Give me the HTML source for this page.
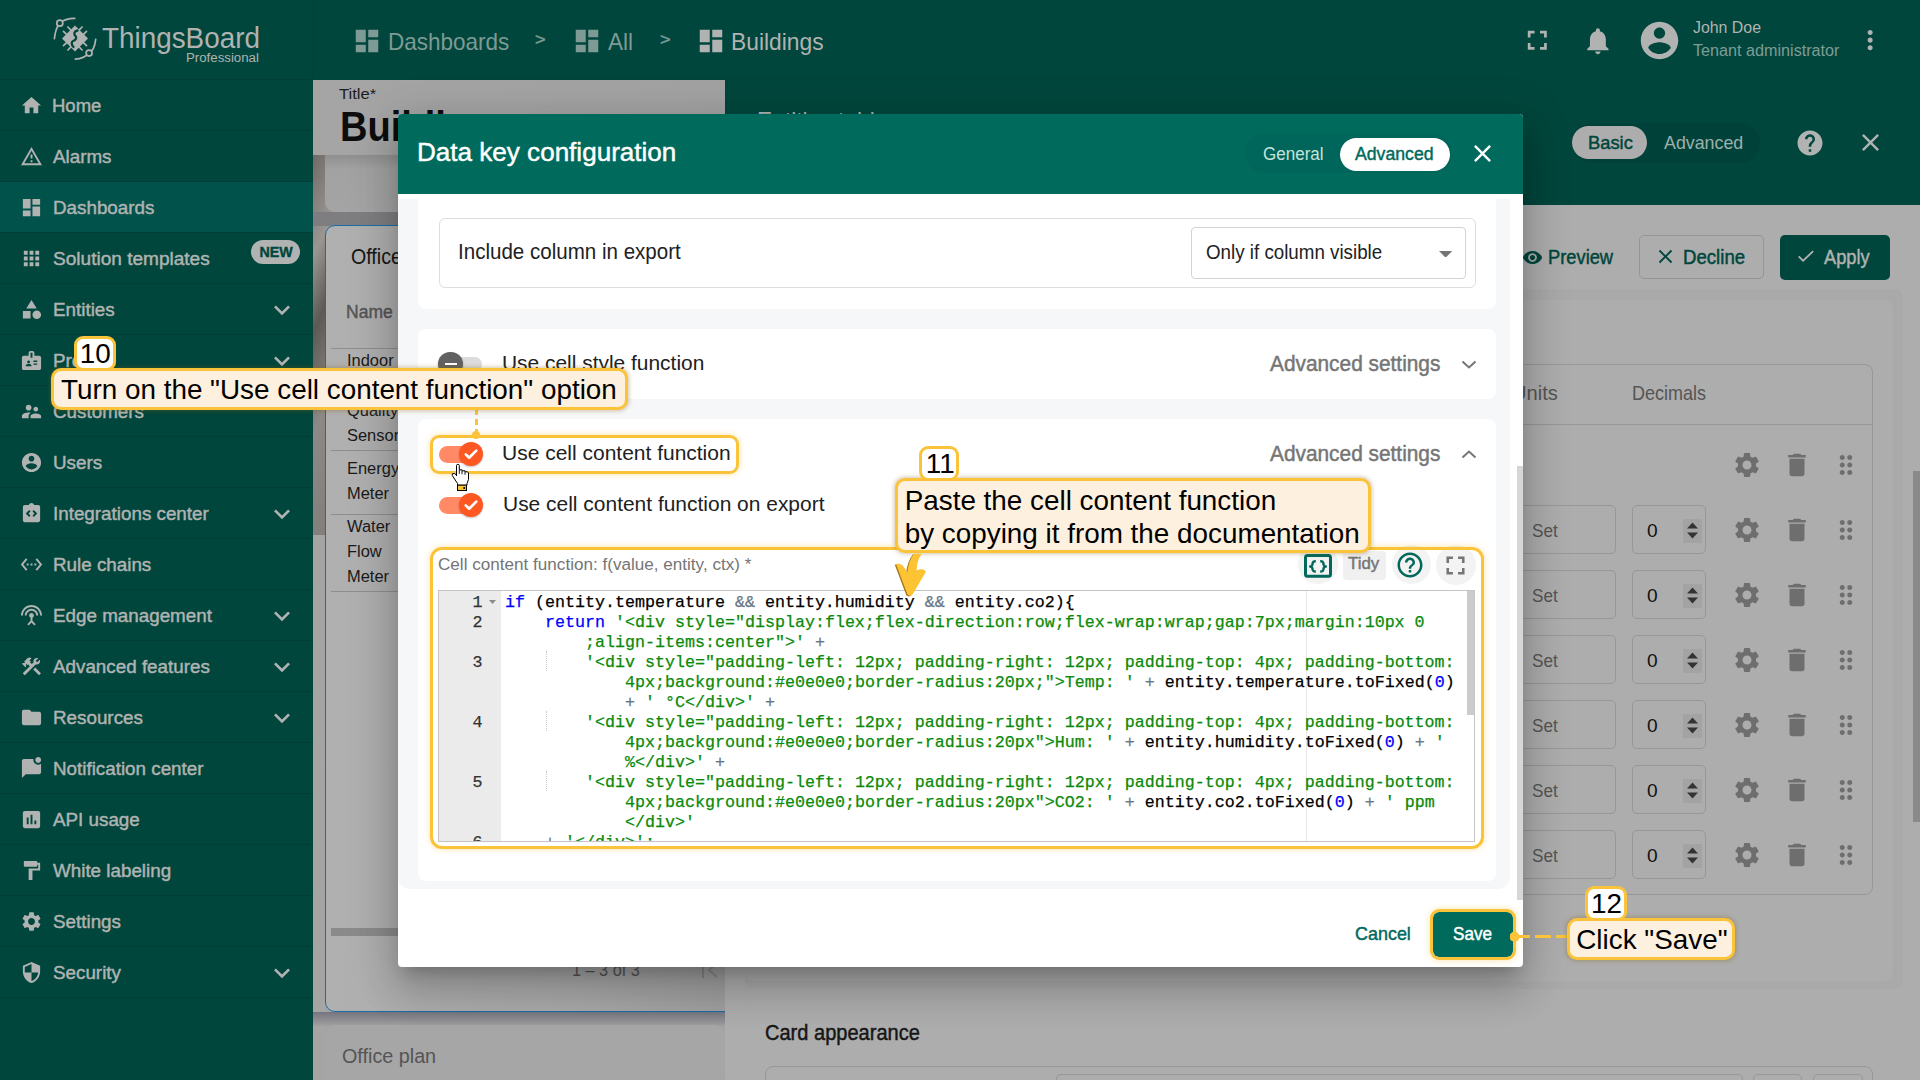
<!DOCTYPE html><html><head><meta charset="utf-8"><style>*{box-sizing:border-box;margin:0;padding:0}
html,body{width:1920px;height:1080px;overflow:hidden;background:#a9a9a9;font-family:"Liberation Sans",sans-serif;position:relative}
.abs{position:absolute}
svg{display:block}
#sidebar{position:absolute;left:0;top:0;width:313px;height:1080px;background:#00463c}
.logo{position:absolute;left:0;top:0;width:313px;height:80px;border-bottom:1px solid #003d36}
.mi{position:absolute;left:0;width:313px;height:51px;border-bottom:1px solid #003e37;color:#b0b3b2;font-size:19px;font-weight:bold}
.mi.active{background:#00524a}

.new{position:absolute;left:251.4px;top:6.9px;width:48.9px;height:24.4px;border-radius:12.2px;background:#b0b3b2;color:#00463c;font-size:15.5px;-webkit-text-stroke:0.4px #00463c;text-align:center;line-height:24.4px}.new span{display:inline-block;transform:scaleX(0.92)}
#topbar{position:absolute;left:313px;top:0;width:1607px;height:80px;background:#00463c}
.t{white-space:nowrap;line-height:1}
.mi .t{position:absolute}
.code{font-family:"Liberation Mono",monospace;font-size:16.67px;line-height:20px;white-space:pre;color:#000;-webkit-text-stroke:0.25px currentColor}
</style></head><body>
<div id="sidebar"><div class="logo">
<svg class="abs" style="left:40px;top:10px" width="70" height="60" viewBox="0 0 70 60">
  <g fill="none" stroke="#b0b3b2" stroke-width="1.7" stroke-linecap="round">
    <path d="M14.4 28.7Q15.5 18 19.8 13.2Q25 8.5 34.7 8.4"/>
    <path d="M55.7 29.3Q54.5 40 49.1 43.1Q44 48.5 35.3 49.1"/>
    <path d="M39.3 19.8L42.1 17M43.7 24.2L46.5 21.4M43.7 32.8L46.5 35.6M39.3 37.2L42.1 40M30.7 37.2L27.9 40M26.3 32.8L23.5 35.6M26.3 24.2L23.5 21.4M30.7 19.8L27.9 17"/>
  </g>
  <circle cx="19.8" cy="13.2" r="3" fill="#00463c" stroke="#b0b3b2" stroke-width="1.7"/>
  <circle cx="49.1" cy="43.1" r="3" fill="#00463c" stroke="#b0b3b2" stroke-width="1.7"/>
  <path fill="#b0b3b2" d="M35 15.5L48 28.5L35 41.5L22 28.5Z"/>
  <path fill="none" stroke="#00463c" stroke-width="2.3" stroke-linecap="round" d="M37.5 20.5C34 21 33.5 24.5 35.5 26C37 27.5 36 30 33 31C31 32 31.5 35 33.5 37"/>
</svg>
<div class="abs t " style="left:101.70px;top:22.57px;font-size:30.2px;color:#b0b3b2;font-weight:normal;transform:scaleX(0.9228);transform-origin:0 0;">ThingsBoard</div>
<div class="abs t " style="left:185.92px;top:52.33px;font-size:12.3px;color:#b0b3b2;font-weight:normal;transform:scaleX(1.0768);transform-origin:0 0;">Professional</div>
</div>
<div class="mi" style="top:80px">
<svg class="abs" style="left:19.8px;top:14.2px;" width="23" height="23" viewBox="0 0 24 24"><path fill="#b0b3b2" d="M10 20v-6h4v6h5v-8h3L12 3 2 12h3v8z"/></svg>
<div class="abs t " style="left:52.03px;top:15.84px;font-size:19.1px;color:#b0b3b2;font-weight:normal;transform:scaleX(0.9693);transform-origin:0 0;-webkit-text-stroke:0.45px #b0b3b2;">Home</div>
</div>
<div class="mi" style="top:131px">
<svg class="abs" style="left:19.8px;top:14.2px;" width="23" height="23" viewBox="0 0 24 24"><path fill="#b0b3b2" d="M12 5.99L19.53 19H4.47L12 5.99M12 2L1 21h22L12 2zm1 14h-2v2h2v-2zm0-6h-2v4h2v-4z"/></svg>
<div class="abs t " style="left:53.00px;top:15.84px;font-size:19.1px;color:#b0b3b2;font-weight:normal;transform:scaleX(0.9850);transform-origin:0 0;-webkit-text-stroke:0.45px #b0b3b2;">Alarms</div>
</div>
<div class="mi active" style="top:182px">
<svg class="abs" style="left:19.8px;top:14.2px;" width="23" height="23" viewBox="0 0 24 24"><path fill="#b0b3b2" d="M3 13h8V3H3v10zm0 8h8v-6H3v6zm10 0h8V11h-8v10zm0-18v6h8V3h-8z"/></svg>
<div class="abs t " style="left:53.00px;top:15.84px;font-size:19.1px;color:#b0b3b2;font-weight:normal;transform:scaleX(0.9850);transform-origin:0 0;-webkit-text-stroke:0.45px #b0b3b2;">Dashboards</div>
</div>
<div class="mi" style="top:233px">
<svg class="abs" style="left:19.8px;top:14.2px;" width="23" height="23" viewBox="0 0 24 24"><path fill="#b0b3b2" d="M4 8h4V4H4v4zm6 12h4v-4h-4v4zm-6 0h4v-4H4v4zm0-6h4v-4H4v4zm6 0h4v-4h-4v4zm6-10v4h4V4h-4zm-6 4h4V4h-4v4zm6 6h4v-4h-4v4zm0 6h4v-4h-4v4z"/></svg>
<div class="abs t " style="left:53.00px;top:15.84px;font-size:19.1px;color:#b0b3b2;font-weight:normal;transform:scaleX(0.9978);transform-origin:0 0;-webkit-text-stroke:0.45px #b0b3b2;">Solution templates</div>
<div class="new"><span>NEW</span></div>
</div>
<div class="mi" style="top:284px">
<svg class="abs" style="left:19.8px;top:14.2px;" width="23" height="23" viewBox="0 0 24 24"><path fill="#b0b3b2" d="M12 2l-5.5 9h11zM17.5 13a4.5 4.5 0 1 0 0 9a4.5 4.5 0 1 0 0-9zM3 13.5h8v8H3z"/></svg>
<div class="abs t " style="left:53.00px;top:15.84px;font-size:19.1px;color:#b0b3b2;font-weight:normal;transform:scaleX(0.9850);transform-origin:0 0;-webkit-text-stroke:0.45px #b0b3b2;">Entities</div>
<svg class="abs" style="left:266px;top:10px;" width="32" height="32" viewBox="0 0 24 24"><path fill="#b0b3b2" d="M16.59 8.59L12 13.17 7.41 8.59 6 10l6 6 6-6z"/></svg>
</div>
<div class="mi" style="top:335px">
<svg class="abs" style="left:19.8px;top:14.2px;" width="23" height="23" viewBox="0 0 24 24"><path fill="#b0b3b2" d="M20 7h-5V4c0-1.1-.9-2-2-2h-2c-1.1 0-2 .9-2 2v3H4c-1.1 0-2 .9-2 2v11c0 1.1.9 2 2 2h16c1.1 0 2-.9 2-2V9c0-1.1-.9-2-2-2zM9 12c.83 0 1.5.67 1.5 1.5S9.83 15 9 15s-1.5-.67-1.5-1.5S8.17 12 9 12zm3 6H6v-.75c0-1 2-1.5 3-1.5s3 .5 3 1.5V18zm1-9h-2V4h2v5zm5 7.5h-4V15h4v1.5zm0-3h-4V12h4v1.5z"/></svg>
<div class="abs t " style="left:53.00px;top:15.84px;font-size:19.1px;color:#b0b3b2;font-weight:normal;transform:scaleX(0.9850);transform-origin:0 0;-webkit-text-stroke:0.45px #b0b3b2;">Profiles</div>
<svg class="abs" style="left:266px;top:10px;" width="32" height="32" viewBox="0 0 24 24"><path fill="#b0b3b2" d="M16.59 8.59L12 13.17 7.41 8.59 6 10l6 6 6-6z"/></svg>
</div>
<div class="mi" style="top:386px">
<svg class="abs" style="left:19.8px;top:14.2px;" width="23" height="23" viewBox="0 0 24 24"><path fill="#b0b3b2" d="M16.5 12c1.38 0 2.49-1.12 2.49-2.5S17.88 7 16.5 7C15.12 7 14 8.12 14 9.5s1.12 2.5 2.5 2.5zM9 11c1.66 0 2.99-1.34 2.99-3S10.66 5 9 5C7.34 5 6 6.34 6 8s1.34 3 3 3zm7.5 3c-1.83 0-5.5.92-5.5 2.75V19h11v-2.25c0-1.830-3.67-2.75-5.5-2.75zM9 13c-2.33 0-7 1.17-7 3.5V19h7v-2.25c0-.85.33-2.34 2.37-3.47C10.5 13.1 9.660 13 9 13z"/></svg>
<div class="abs t " style="left:53.00px;top:15.84px;font-size:19.1px;color:#b0b3b2;font-weight:normal;transform:scaleX(0.9850);transform-origin:0 0;-webkit-text-stroke:0.45px #b0b3b2;">Customers</div>
</div>
<div class="mi" style="top:437px">
<svg class="abs" style="left:19.8px;top:14.2px;" width="23" height="23" viewBox="0 0 24 24"><path fill="#b0b3b2" d="M12 2C6.48 2 2 6.48 2 12s4.48 10 10 10 10-4.48 10-10S17.52 2 12 2zm0 3c1.66 0 3 1.34 3 3s-1.34 3-3 3-3-1.34-3-3 1.34-3 3-3zm0 14.2c-2.5 0-4.71-1.28-6-3.22.03-1.99 4-3.08 6-3.08 1.99 0 5.97 1.09 6 3.08-1.29 1.94-3.5 3.22-6 3.22z"/></svg>
<div class="abs t " style="left:53.00px;top:15.84px;font-size:19.1px;color:#b0b3b2;font-weight:normal;transform:scaleX(0.9850);transform-origin:0 0;-webkit-text-stroke:0.45px #b0b3b2;">Users</div>
</div>
<div class="mi" style="top:488px">
<svg class="abs" style="left:19.8px;top:14.2px;" width="23" height="23" viewBox="0 0 24 24"><path fill="#b0b3b2" d="M5 3h4.2C9.6 1.8 10.7 1 12 1s2.4.8 2.8 2H19c1.1 0 2 .9 2 2v14c0 1.1-.9 2-2 2H5c-1.1 0-2-.9-2-2V5c0-1.1.9-2 2-2zM11 14.17L8.83 12 11 9.83 9.59 8.41 6 12l3.59 3.59zm2 0l1.41 1.42L18 12l-3.59-3.59L13 9.83 15.17 12z"/></svg>
<div class="abs t " style="left:53.00px;top:15.84px;font-size:19.1px;color:#b0b3b2;font-weight:normal;transform:scaleX(0.9850);transform-origin:0 0;-webkit-text-stroke:0.45px #b0b3b2;">Integrations center</div>
<svg class="abs" style="left:266px;top:10px;" width="32" height="32" viewBox="0 0 24 24"><path fill="#b0b3b2" d="M16.59 8.59L12 13.17 7.41 8.59 6 10l6 6 6-6z"/></svg>
</div>
<div class="mi" style="top:539px">
<svg class="abs" style="left:19.8px;top:14.2px;" width="23" height="23" viewBox="0 0 24 24"><path fill="#b0b3b2" d="M7.77 6.76L6.23 5.48.82 12l5.41 6.52 1.54-1.28L3.42 12l4.35-5.24zM7 13h2v-2H7v2zm10-2h-2v2h2v-2zm-6 2h2v-2h-2v2zm6.77-7.52l-1.54 1.28L20.58 12l-4.35 5.24 1.54 1.28L23.18 12l-5.41-6.52z"/></svg>
<div class="abs t " style="left:53.00px;top:15.84px;font-size:19.1px;color:#b0b3b2;font-weight:normal;transform:scaleX(0.9850);transform-origin:0 0;-webkit-text-stroke:0.45px #b0b3b2;">Rule chains</div>
</div>
<div class="mi" style="top:590px">
<svg class="abs" style="left:19.8px;top:14.2px;" width="23" height="23" viewBox="0 0 24 24"><path fill="#b0b3b2" d="M12 5c-3.87 0-7 3.13-7 7h2c0-2.76 2.24-5 5-5s5 2.24 5 5h2c0-3.87-3.13-7-7-7zm1 9.29c.88-.39 1.5-1.26 1.5-2.29 0-1.38-1.12-2.5-2.5-2.5S9.5 10.62 9.5 12c0 1.02.62 1.9 1.5 2.29v3.3L7.59 21 9 22.41l3-3 3 3L16.41 21 13 17.59v-3.3zM12 1C5.93 1 1 5.930 1 12h2c0-4.97 4.03-9 9-9s9 4.03 9 9h2c0-6.07-4.93-11-11-11z"/></svg>
<div class="abs t " style="left:53.00px;top:15.84px;font-size:19.1px;color:#b0b3b2;font-weight:normal;transform:scaleX(0.9850);transform-origin:0 0;-webkit-text-stroke:0.45px #b0b3b2;">Edge management</div>
<svg class="abs" style="left:266px;top:10px;" width="32" height="32" viewBox="0 0 24 24"><path fill="#b0b3b2" d="M16.59 8.59L12 13.17 7.41 8.59 6 10l6 6 6-6z"/></svg>
</div>
<div class="mi" style="top:641px">
<svg class="abs" style="left:19.8px;top:14.2px;" width="23" height="23" viewBox="0 0 24 24"><path fill="#b0b3b2" d="M13.783 15.172l2.121-2.121 5.996 5.996-2.121 2.121zM17.5 10c1.93 0 3.5-1.57 3.5-3.5 0-.58-.16-1.12-.41-1.6l-2.7 2.7-1.49-1.49 2.7-2.7c-.48-.25-1.02-.41-1.6-.41C15.57 3 14 4.57 14 6.5c0 .41.08.8.21 1.16l-1.85 1.85-1.78-1.78.71-.71-1.41-1.41L12 3.49c-1.17-1.17-3.07-1.17-4.24 0L4.22 7.03l1.41 1.41H2.81l-.71.71 3.54 3.54.71-.71V9.15l1.41 1.41.71-.71 1.78 1.78-7.41 7.41 2.12 2.12L16.34 9.79c.36.13.75.21 1.16.21z"/></svg>
<div class="abs t " style="left:53.00px;top:15.84px;font-size:19.1px;color:#b0b3b2;font-weight:normal;transform:scaleX(0.9850);transform-origin:0 0;-webkit-text-stroke:0.45px #b0b3b2;">Advanced features</div>
<svg class="abs" style="left:266px;top:10px;" width="32" height="32" viewBox="0 0 24 24"><path fill="#b0b3b2" d="M16.59 8.59L12 13.17 7.41 8.59 6 10l6 6 6-6z"/></svg>
</div>
<div class="mi" style="top:692px">
<svg class="abs" style="left:19.8px;top:14.2px;" width="23" height="23" viewBox="0 0 24 24"><path fill="#b0b3b2" d="M10 4H4c-1.1 0-1.99.9-1.99 2L2 18c0 1.1.9 2 2 2h16c1.1 0 2-.9 2-2V8c0-1.1-.9-2-2-2h-8l-2-2z"/></svg>
<div class="abs t " style="left:53.00px;top:15.84px;font-size:19.1px;color:#b0b3b2;font-weight:normal;transform:scaleX(0.9850);transform-origin:0 0;-webkit-text-stroke:0.45px #b0b3b2;">Resources</div>
<svg class="abs" style="left:266px;top:10px;" width="32" height="32" viewBox="0 0 24 24"><path fill="#b0b3b2" d="M16.59 8.59L12 13.17 7.41 8.59 6 10l6 6 6-6z"/></svg>
</div>
<div class="mi" style="top:743px">
<svg class="abs" style="left:19.8px;top:14.2px;" width="23" height="23" viewBox="0 0 24 24"><path fill="#b0b3b2" d="M22 6.98V16c0 1.1-.9 2-2 2H6l-4 4V4c0-1.1.9-2 2-2h10.1c-.06.32-.1.66-.1 1 0 2.76 2.24 5 5 5 1.13 0 2.16-.39 3-1.02zM16 3c0 1.66 1.34 3 3 3s3-1.34 3-3-1.34-3-3-3-3 1.34-3 3z"/></svg>
<div class="abs t " style="left:53.00px;top:15.84px;font-size:19.1px;color:#b0b3b2;font-weight:normal;transform:scaleX(0.9850);transform-origin:0 0;-webkit-text-stroke:0.45px #b0b3b2;">Notification center</div>
</div>
<div class="mi" style="top:794px">
<svg class="abs" style="left:19.8px;top:14.2px;" width="23" height="23" viewBox="0 0 24 24"><path fill="#b0b3b2" d="M19 3H5c-1.1 0-2 .9-2 2v14c0 1.1.9 2 2 2h14c1.1 0 2-.9 2-2V5c0-1.1-.9-2-2-2zM9 17H7v-7h2v7zm4 0h-2V7h2v10zm4 0h-2v-4h2v4z"/></svg>
<div class="abs t " style="left:53.00px;top:15.84px;font-size:19.1px;color:#b0b3b2;font-weight:normal;transform:scaleX(0.9850);transform-origin:0 0;-webkit-text-stroke:0.45px #b0b3b2;">API usage</div>
</div>
<div class="mi" style="top:845px">
<svg class="abs" style="left:19.8px;top:14.2px;" width="23" height="23" viewBox="0 0 24 24"><path fill="#b0b3b2" d="M18 4V3c0-.55-.45-1-1-1H5c-.55 0-1 .45-1 1v4c0 .55.45 1 1 1h12c.55 0 1-.45 1-1V6h1v4H9v11c0 .55.45 1 1 1h2c.55 0 1-.45 1-1v-9h8V4h-3z"/></svg>
<div class="abs t " style="left:53.00px;top:15.84px;font-size:19.1px;color:#b0b3b2;font-weight:normal;transform:scaleX(0.9850);transform-origin:0 0;-webkit-text-stroke:0.45px #b0b3b2;">White labeling</div>
</div>
<div class="mi" style="top:896px">
<svg class="abs" style="left:19.8px;top:14.2px;" width="23" height="23" viewBox="0 0 24 24"><path fill="#b0b3b2" d="M19.14 12.94c.04-.3.06-.61.06-.94 0-.32-.02-.64-.07-.94l2.03-1.58c.18-.14.23-.41.12-.61l-1.92-3.32c-.12-.22-.37-.29-.59-.22l-2.39.96c-.5-.38-1.03-.7-1.62-.94l-.36-2.54c-.04-.24-.24-.41-.48-.41h-3.84c-.24 0-.43.17-.47.41l-.36 2.54c-.59.24-1.13.57-1.62.94l-2.39-.96c-.22-.08-.47 0-.59.22L2.74 8.87c-.12.21-.08.47.12.61l2.03 1.58c-.05.3-.09.63-.09.94s.02.64.07.94l-2.03 1.58c-.18.14-.23.41-.12.61l1.92 3.32c.12.22.37.29.59.22l2.39-.96c.5.38 1.03.7 1.62.94l.36 2.54c.05.24.24.41.48.41h3.840c.24 0 .44-.17.47-.41l.36-2.54c.59-.24 1.13-.56 1.62-.94l2.39.96c.22.08.47 0 .59-.22l1.92-3.32c.12-.22.07-.47-.12-.61l-2.01-1.58zM12 15.6c-1.98 0-3.6-1.62-3.6-3.6s1.62-3.6 3.6-3.6 3.6 1.62 3.6 3.6-1.62 3.6-3.6 3.6z"/></svg>
<div class="abs t " style="left:53.00px;top:15.84px;font-size:19.1px;color:#b0b3b2;font-weight:normal;transform:scaleX(0.9850);transform-origin:0 0;-webkit-text-stroke:0.45px #b0b3b2;">Settings</div>
</div>
<div class="mi" style="top:947px">
<svg class="abs" style="left:19.8px;top:14.2px;" width="23" height="23" viewBox="0 0 24 24"><path fill="#b0b3b2" d="M12 1L3 5v6c0 5.55 3.84 10.74 9 12 5.16-1.26 9-6.45 9-12V5l-9-4zm0 10.99h7c-.53 4.12-3.28 7.79-7 8.94V12H5V6.3l7-3.11v8.8z"/></svg>
<div class="abs t " style="left:53.00px;top:15.84px;font-size:19.1px;color:#b0b3b2;font-weight:normal;transform:scaleX(0.9850);transform-origin:0 0;-webkit-text-stroke:0.45px #b0b3b2;">Security</div>
<svg class="abs" style="left:266px;top:10px;" width="32" height="32" viewBox="0 0 24 24"><path fill="#b0b3b2" d="M16.59 8.59L12 13.17 7.41 8.59 6 10l6 6 6-6z"/></svg>
</div>
</div>
<div id="topbar"></div>
<div class="abs" style="left:313px;top:0;width:1px;height:80px;background:#00403a"></div>
<svg class="abs" style="left:351.5px;top:25.5px;" width="30" height="30" viewBox="0 0 24 24"><path fill="#7d9a95" d="M3 13h8V3H3v10zm0 8h8v-6H3v6zm10 0h8V11h-8v10zm0-18v6h8V3h-8z"/></svg>
<div class="abs t " style="left:388.03px;top:31.49px;font-size:23.2px;color:#7d9a95;font-weight:normal;transform:scaleX(0.9705);transform-origin:0 0;">Dashboards</div>
<div class="abs t " style="left:535.00px;top:30.78px;font-size:17px;color:#7d9a95;font-weight:normal;transform:scaleX(1.0700);transform-origin:0 0;-webkit-text-stroke:0.45px #7d9a95;">&gt;</div>
<svg class="abs" style="left:572px;top:25.5px;" width="30" height="30" viewBox="0 0 24 24"><path fill="#7d9a95" d="M3 13h8V3H3v10zm0 8h8v-6H3v6zm10 0h8V11h-8v10zm0-18v6h8V3h-8z"/></svg>
<div class="abs t " style="left:608.00px;top:31.49px;font-size:23.2px;color:#7d9a95;font-weight:normal;transform:scaleX(0.9749);transform-origin:0 0;">All</div>
<div class="abs t " style="left:659.80px;top:30.78px;font-size:17px;color:#7d9a95;font-weight:normal;transform:scaleX(1.0700);transform-origin:0 0;-webkit-text-stroke:0.45px #7d9a95;">&gt;</div>
<svg class="abs" style="left:695.5px;top:25.5px;" width="30" height="30" viewBox="0 0 24 24"><path fill="#b0b3b2" d="M3 13h8V3H3v10zm0 8h8v-6H3v6zm10 0h8V11h-8v10zm0-18v6h8V3h-8z"/></svg>
<div class="abs t " style="left:731.02px;top:31.49px;font-size:23.2px;color:#b0b3b2;font-weight:normal;transform:scaleX(0.9837);transform-origin:0 0;">Buildings</div>
<svg class="abs" style="left:1521px;top:23.5px;" width="32.6" height="32.6" viewBox="0 0 24 24"><path fill="#b0b3b2" d="M7 14H5v5h5v-2H7v-3zm-2-4h2V7h3V5H5v5zm12 7h-3v2h5v-5h-2v3zM14 5v2h3v3h2V5h-5z"/></svg>
<svg class="abs" style="left:1581.5px;top:24.6px;" width="31.8" height="31.8" viewBox="0 0 24 24"><path fill="#b0b3b2" d="M12 22c1.1 0 2-.9 2-2h-4c0 1.1.89 2 2 2zm6-6v-5c0-3.07-1.64-5.64-4.5-6.32V4c0-.83-.67-1.5-1.5-1.5s-1.5.67-1.5 1.5v.68C7.63 5.36 6 7.920 6 11v5l-2 2v1h16v-1l-2-2z"/></svg>
<svg class="abs" style="left:1637.2px;top:18px;" width="45" height="45" viewBox="0 0 24 24"><path fill="#b0b3b2" d="M12 2C6.48 2 2 6.48 2 12s4.48 10 10 10 10-4.48 10-10S17.52 2 12 2zm0 3c1.66 0 3 1.34 3 3s-1.34 3-3 3-3-1.34-3-3 1.34-3 3-3zm0 14.2c-2.5 0-4.71-1.28-6-3.22.03-1.99 4-3.08 6-3.08 1.99 0 5.97 1.09 6 3.08-1.29 1.94-3.5 3.22-6 3.22z"/></svg>
<div class="abs t " style="left:1693.00px;top:19.03px;font-size:17.3px;color:#b0b3b2;font-weight:normal;transform:scaleX(0.9187);transform-origin:0 0;">John Doe</div>
<div class="abs t " style="left:1693.00px;top:42.23px;font-size:17.3px;color:#7f9c97;font-weight:normal;transform:scaleX(0.9355);transform-origin:0 0;">Tenant administrator</div>
<svg class="abs" style="left:1855px;top:25px;" width="30.3" height="30.3" viewBox="0 0 24 24"><path fill="#b0b3b2" d="M12 8c1.1 0 2-.9 2-2s-.9-2-2-2-2 .9-2 2 .9 2 2 2zm0 2c-1.1 0-2 .9-2 2s.9 2 2 2 2-.9 2-2-.9-2-2-2zm0 6c-1.1 0-2 .9-2 2s.9 2 2 2 2-.9 2-2-.9-2-2-2z"/></svg>
<div class="abs" style="left:313px;top:80px;width:412px;height:1000px;background:#a3a3a3"></div>
<div class="abs" style="left:313px;top:80px;width:412px;height:75px;background:linear-gradient(90deg,#a5a5a5,#a2a2a2)"></div>
<div class="abs t " style="left:339.00px;top:85.87px;font-size:15.2px;color:#1c1c1c;font-weight:normal;transform:scaleX(1.0930);transform-origin:0 0;">Title*</div>
<div class="abs t " style="left:339.90px;top:106.23px;font-size:42.3px;color:#0d0d0d;font-weight:bold;transform:scaleX(0.9000);transform-origin:0 0;">Buildings</div>
<div class="abs" style="left:313px;top:155px;width:412px;height:380px;background:linear-gradient(115deg,#6f6a66 0%,#9a9793 8%,#5d5955 14%,#8c8986 22%,#7a7672 40%,#908d8a 60%,#6c6864 100%)"></div>
<div class="abs" style="left:325px;top:155px;width:400px;height:57px;background:linear-gradient(180deg,#8f8f8f 0%,#a2a2a2 25%,#a4a4a4 100%);border-bottom-left-radius:10px"></div>
<div class="abs" style="left:313px;top:212px;width:412px;height:14px;background:#7e7e80"></div>
<div class="abs" style="left:313px;top:535px;width:12px;height:545px;background:#a5a5a5"></div>
<div class="abs" style="left:325px;top:225px;width:420px;height:787px;border:1.5px solid #1a6ea8;border-radius:10px;background:linear-gradient(90deg,#b0b0b0,#a9a9a9 60%,#9e9e9e)"></div>
<div class="abs t " style="left:350.70px;top:246.89px;font-size:21.3px;color:#161616;font-weight:normal;transform:scaleX(0.9200);transform-origin:0 0;">Office</div>
<div class="abs t " style="left:345.76px;top:302.91px;font-size:18.7px;color:#555555;font-weight:normal;transform:scaleX(0.9369);transform-origin:0 0;-webkit-text-stroke:0.45px #555555;">Name</div>
<div class="abs" style="left:331px;top:348px;width:400px;height:1px;background:#8e8e8e"></div>
<div class="abs" style="left:331px;top:449.5px;width:400px;height:1px;background:#8e8e8e"></div>
<div class="abs" style="left:331px;top:514px;width:400px;height:1px;background:#8e8e8e"></div>
<div class="abs" style="left:331px;top:590.5px;width:400px;height:1px;background:#8e8e8e"></div>
<div class="abs t " style="left:346.70px;top:352.51px;font-size:16.8px;color:#1a1a1a;font-weight:normal;transform:scaleX(0.9800);transform-origin:0 0;">Indoor</div>
<div class="abs t " style="left:346.70px;top:377.51px;font-size:16.8px;color:#1a1a1a;font-weight:normal;transform:scaleX(0.9800);transform-origin:0 0;">Air</div>
<div class="abs t " style="left:346.70px;top:402.51px;font-size:16.8px;color:#1a1a1a;font-weight:normal;transform:scaleX(0.9800);transform-origin:0 0;">Quality</div>
<div class="abs t " style="left:346.70px;top:427.51px;font-size:16.8px;color:#1a1a1a;font-weight:normal;transform:scaleX(0.9800);transform-origin:0 0;">Sensor</div>
<div class="abs t " style="left:346.70px;top:460.51px;font-size:16.8px;color:#1a1a1a;font-weight:normal;transform:scaleX(0.9800);transform-origin:0 0;">Energy</div>
<div class="abs t " style="left:346.70px;top:485.51px;font-size:16.8px;color:#1a1a1a;font-weight:normal;transform:scaleX(0.9800);transform-origin:0 0;">Meter</div>
<div class="abs t " style="left:346.70px;top:518.51px;font-size:16.8px;color:#1a1a1a;font-weight:normal;transform:scaleX(0.9800);transform-origin:0 0;">Water</div>
<div class="abs t " style="left:346.70px;top:543.51px;font-size:16.8px;color:#1a1a1a;font-weight:normal;transform:scaleX(0.9800);transform-origin:0 0;">Flow</div>
<div class="abs t " style="left:346.70px;top:568.51px;font-size:16.8px;color:#1a1a1a;font-weight:normal;transform:scaleX(0.9800);transform-origin:0 0;">Meter</div>
<div class="abs" style="left:331px;top:928px;width:400px;height:8px;background:#8a8a8a"></div>
<div class="abs t " style="left:571.75px;top:960.46px;font-size:19px;color:#555;font-weight:normal;transform:scaleX(0.8550);transform-origin:0 0;">1 &ndash; 3 of 3</div>
<svg class="abs" style="left:700px;top:958px" width="22" height="24" viewBox="0 0 22 24"><path fill="none" stroke="#8a8a8a" stroke-width="2" d="M3 4V20M17 5L9 12L17 19"/></svg>
<div class="abs" style="left:313px;top:1012px;width:412px;height:14px;background:linear-gradient(180deg,#75757f,#a0a0a0)"></div>
<div class="abs" style="left:325px;top:1025px;width:400px;height:60px;background:#a6a6a6;border-radius:10px"></div>
<div class="abs t " style="left:342.00px;top:1045.55px;font-size:20px;color:#555;font-weight:normal;transform:scaleX(0.9881);transform-origin:0 0;">Office plan</div>
<div class="abs" style="left:725px;top:80px;width:1195px;height:125px;background:#00463c"></div>
<div class="abs t " style="left:757.00px;top:109.36px;font-size:24px;color:#b0b3b2;font-weight:normal;transform:scaleX(0.9500);transform-origin:0 0;">Entities table</div>
<div class="abs" style="left:725px;top:205px;width:1195px;height:875px;background:#adadad"></div>
<div class="abs" style="left:1572px;top:123px;width:188px;height:39.5px;border-radius:20px;background:#00423a"></div>
<div class="abs" style="left:1572px;top:126px;width:75px;height:33px;border-radius:17px;background:#adadad"></div>
<div class="abs t " style="left:1587.74px;top:133.59px;font-size:18.2px;color:#00463c;font-weight:normal;transform:scaleX(1.0085);transform-origin:0 0;-webkit-text-stroke:0.45px #00463c;">Basic</div>
<div class="abs t " style="left:1663.75px;top:133.59px;font-size:18.2px;color:#9db0ac;font-weight:normal;transform:scaleX(0.9790);transform-origin:0 0;">Advanced</div>
<svg class="abs" style="left:1794.5px;top:127.5px;" width="30" height="30" viewBox="0 0 24 24"><path fill="#b0b3b2" d="M12 2C6.48 2 2 6.48 2 12s4.48 10 10 10 10-4.48 10-10S17.52 2 12 2zm1 17h-2v-2h2v2zm2.07-7.75l-.9.92C13.45 12.9 13 13.5 13 15h-2v-.5c0-1.1.45-2.1 1.17-2.83l1.24-1.26c.37-.36.59-.86.59-1.41 0-1.1-.9-2-2-2s-2 .9-2 2H8c0-2.21 1.79-4 4-4s4 1.79 4 4c0 .88-.36 1.68-.93 2.25z"/></svg>
<svg class="abs" style="left:1855.6px;top:128.4px;" width="29" height="29" viewBox="0 0 24 24"><path fill="#b0b3b2" d="M19 6.41L17.59 5 12 10.59 6.41 5 5 6.41 10.59 12 5 17.59 6.41 19 12 13.41 17.59 19 19 17.59 13.41 12z"/></svg>
<svg class="abs" style="left:1521.5px;top:247px;" width="21" height="21" viewBox="0 0 24 24"><path fill="#00463c" d="M12 4.5C7 4.5 2.73 7.61 1 12c1.73 4.39 6 7.5 11 7.5s9.27-3.11 11-7.5c-1.73-4.39-6-7.5-11-7.5zM12 17c-2.76 0-5-2.24-5-5s2.24-5 5-5 5 2.24 5 5-2.24 5-5 5zm0-8c-1.66 0-3 1.34-3 3s1.34 3 3 3 3-1.34 3-3-1.34-3-3-3z"/></svg>
<div class="abs t " style="left:1548.08px;top:247.82px;font-size:19.9px;color:#00463c;font-weight:normal;transform:scaleX(0.9200);transform-origin:0 0;-webkit-text-stroke:0.45px #00463c;">Preview</div>
<div class="abs" style="left:1639px;top:235.4px;width:125.4px;height:43.6px;border:1px solid #959595;border-radius:5px"></div>
<svg class="abs" style="left:1654.2px;top:245.2px;" width="23" height="23" viewBox="0 0 24 24"><path fill="#00463c" d="M19 6.41L17.59 5 12 10.59 6.41 5 5 6.41 10.59 12 5 17.59 6.41 19 12 13.41 17.59 19 19 17.59 13.41 12z"/></svg>
<div class="abs t " style="left:1682.56px;top:247.82px;font-size:19.9px;color:#00463c;font-weight:normal;transform:scaleX(0.9361);transform-origin:0 0;-webkit-text-stroke:0.45px #00463c;">Decline</div>
<div class="abs" style="left:1780px;top:235px;width:110px;height:44.6px;background:#00463c;border-radius:5px"></div>
<svg class="abs" style="left:1795px;top:244.5px;" width="21.5" height="21.5" viewBox="0 0 24 24"><path fill="#b0b3b2" d="M9 16.17L4.83 12l-1.42 1.41L9 19 21 7.59 19.59 6.17z"/></svg>
<div class="abs t " style="left:1823.75px;top:247.82px;font-size:19.9px;color:#b0b3b2;font-weight:normal;transform:scaleX(0.9165);transform-origin:0 0;-webkit-text-stroke:0.45px #b0b3b2;">Apply</div>
<div class="abs" style="left:745px;top:289px;width:1158px;height:700px;background:#a9a9a9;border-radius:8px"></div>
<div class="abs" style="left:745px;top:300px;width:1148px;height:681px;background:#adadad;border-radius:8px"></div>
<div class="abs" style="left:765px;top:364.4px;width:1108px;height:531px;border:1px solid #979797;border-radius:8px"></div>
<div class="abs" style="left:765px;top:424.2px;width:1108px;height:1px;background:#979797"></div>
<div class="abs t " style="left:1512.00px;top:383.35px;font-size:20.3px;color:#555;font-weight:normal;transform:scaleX(0.9900);transform-origin:0 0;">Units</div>
<div class="abs t " style="left:1631.51px;top:383.35px;font-size:20.3px;color:#555;font-weight:normal;transform:scaleX(0.8863);transform-origin:0 0;">Decimals</div>
<svg class="abs" style="left:1732px;top:450px;" width="30" height="30" viewBox="0 0 24 24"><path fill="#6e6e6e" d="M19.14 12.94c.04-.3.06-.61.06-.94 0-.32-.02-.64-.07-.94l2.03-1.58c.18-.14.23-.41.12-.61l-1.92-3.32c-.12-.22-.37-.29-.59-.22l-2.39.96c-.5-.38-1.03-.7-1.62-.94l-.36-2.54c-.04-.24-.24-.41-.48-.41h-3.84c-.24 0-.43.17-.47.41l-.36 2.54c-.59.24-1.13.57-1.62.94l-2.39-.96c-.22-.08-.47 0-.59.22L2.74 8.87c-.12.21-.08.47.12.61l2.03 1.58c-.05.3-.09.63-.09.94s.02.64.07.94l-2.03 1.58c-.18.14-.23.41-.12.61l1.92 3.32c.12.22.37.29.59.22l2.39-.96c.5.38 1.03.7 1.62.94l.36 2.54c.05.24.24.41.48.41h3.840c.24 0 .44-.17.47-.41l.36-2.54c.59-.24 1.13-.56 1.62-.94l2.39.96c.22.08.47 0 .59-.22l1.92-3.32c.12-.22.07-.47-.12-.61l-2.01-1.58zM12 15.6c-1.98 0-3.6-1.62-3.6-3.6s1.62-3.6 3.6-3.6 3.6 1.62 3.6 3.6-1.62 3.6-3.6 3.6z"/></svg>
<svg class="abs" style="left:1782px;top:450px;" width="30" height="30" viewBox="0 0 24 24"><path fill="#6e6e6e" d="M6 19c0 1.1.9 2 2 2h8c1.1 0 2-.9 2-2V7H6v12zM19 4h-3.5l-1-1h-5l-1 1H5v2h14V4z"/></svg>
<svg class="abs" style="left:1831px;top:450px;" width="30" height="30" viewBox="0 0 24 24"><path fill="#6e6e6e" d="M11 18c0 1.1-.9 2-2 2s-2-.9-2-2 .9-2 2-2 2 .9 2 2zm-2-8c-1.1 0-2 .9-2 2s.9 2 2 2 2-.9 2-2-.9-2-2-2zm0-6c-1.1 0-2 .9-2 2s.9 2 2 2 2-.9 2-2-.9-2-2-2zm6 4c1.1 0 2-.9 2-2s-.9-2-2-2-2 .9-2 2 .9 2 2 2zm0 2c-1.1 0-2 .9-2 2s.9 2 2 2 2-.9 2-2-.9-2-2-2zm0 6c-1.1 0-2 .9-2 2s.9 2 2 2 2-.9 2-2-.9-2-2-2z"/></svg>
<div class="abs" style="left:1490px;top:505.2px;width:126.4px;height:48.8px;border:1px solid #979797;border-radius:5px"></div>
<div class="abs t " style="left:1532.00px;top:520.74px;font-size:19.1px;color:#555;font-weight:normal;transform:scaleX(0.8994);transform-origin:0 0;">Set</div>
<div class="abs" style="left:1632.4px;top:505.2px;width:74px;height:48.8px;border:1px solid #979797;border-radius:5px"></div>
<div class="abs t " style="left:1647.00px;top:520.74px;font-size:19.1px;color:#111;font-weight:normal;">0</div>
<div class="abs" style="left:1683px;top:518.5px;width:19px;height:24px;background:#a3a3a3"></div>
<svg class="abs" style="left:1686px;top:521px" width="13" height="19" viewBox="0 0 13 19"><path fill="#333" d="M6.5 1.5L12 7.5H1zM1 11.5h11L6.5 17.5z"/></svg>
<svg class="abs" style="left:1732px;top:515px;" width="30" height="30" viewBox="0 0 24 24"><path fill="#6e6e6e" d="M19.14 12.94c.04-.3.06-.61.06-.94 0-.32-.02-.64-.07-.94l2.03-1.58c.18-.14.23-.41.12-.61l-1.92-3.32c-.12-.22-.37-.29-.59-.22l-2.39.96c-.5-.38-1.03-.7-1.62-.94l-.36-2.54c-.04-.24-.24-.41-.48-.41h-3.84c-.24 0-.43.17-.47.41l-.36 2.54c-.59.24-1.13.57-1.62.94l-2.39-.96c-.22-.08-.47 0-.59.22L2.74 8.87c-.12.21-.08.47.12.61l2.03 1.58c-.05.3-.09.63-.09.94s.02.64.07.94l-2.03 1.58c-.18.14-.23.41-.12.61l1.92 3.32c.12.22.37.29.59.22l2.39-.96c.5.38 1.03.7 1.62.94l.36 2.54c.05.24.24.41.48.41h3.840c.24 0 .44-.17.47-.41l.36-2.54c.59-.24 1.13-.56 1.62-.94l2.39.96c.22.08.47 0 .59-.22l1.92-3.32c.12-.22.07-.47-.12-.61l-2.01-1.58zM12 15.6c-1.98 0-3.6-1.62-3.6-3.6s1.62-3.6 3.6-3.6 3.6 1.62 3.6 3.6-1.62 3.6-3.6 3.6z"/></svg>
<svg class="abs" style="left:1782px;top:515px;" width="30" height="30" viewBox="0 0 24 24"><path fill="#6e6e6e" d="M6 19c0 1.1.9 2 2 2h8c1.1 0 2-.9 2-2V7H6v12zM19 4h-3.5l-1-1h-5l-1 1H5v2h14V4z"/></svg>
<svg class="abs" style="left:1831px;top:515px;" width="30" height="30" viewBox="0 0 24 24"><path fill="#6e6e6e" d="M11 18c0 1.1-.9 2-2 2s-2-.9-2-2 .9-2 2-2 2 .9 2 2zm-2-8c-1.1 0-2 .9-2 2s.9 2 2 2 2-.9 2-2-.9-2-2-2zm0-6c-1.1 0-2 .9-2 2s.9 2 2 2 2-.9 2-2-.9-2-2-2zm6 4c1.1 0 2-.9 2-2s-.9-2-2-2-2 .9-2 2 .9 2 2 2zm0 2c-1.1 0-2 .9-2 2s.9 2 2 2 2-.9 2-2-.9-2-2-2zm0 6c-1.1 0-2 .9-2 2s.9 2 2 2 2-.9 2-2-.9-2-2-2z"/></svg>
<div class="abs" style="left:1490px;top:570.2px;width:126.4px;height:48.8px;border:1px solid #979797;border-radius:5px"></div>
<div class="abs t " style="left:1532.00px;top:585.74px;font-size:19.1px;color:#555;font-weight:normal;transform:scaleX(0.8994);transform-origin:0 0;">Set</div>
<div class="abs" style="left:1632.4px;top:570.2px;width:74px;height:48.8px;border:1px solid #979797;border-radius:5px"></div>
<div class="abs t " style="left:1647.00px;top:585.74px;font-size:19.1px;color:#111;font-weight:normal;">0</div>
<div class="abs" style="left:1683px;top:583.5px;width:19px;height:24px;background:#a3a3a3"></div>
<svg class="abs" style="left:1686px;top:586px" width="13" height="19" viewBox="0 0 13 19"><path fill="#333" d="M6.5 1.5L12 7.5H1zM1 11.5h11L6.5 17.5z"/></svg>
<svg class="abs" style="left:1732px;top:580px;" width="30" height="30" viewBox="0 0 24 24"><path fill="#6e6e6e" d="M19.14 12.94c.04-.3.06-.61.06-.94 0-.32-.02-.64-.07-.94l2.03-1.58c.18-.14.23-.41.12-.61l-1.92-3.32c-.12-.22-.37-.29-.59-.22l-2.39.96c-.5-.38-1.03-.7-1.62-.94l-.36-2.54c-.04-.24-.24-.41-.48-.41h-3.84c-.24 0-.43.17-.47.41l-.36 2.54c-.59.24-1.13.57-1.62.94l-2.39-.96c-.22-.08-.47 0-.59.22L2.74 8.87c-.12.21-.08.47.12.61l2.03 1.58c-.05.3-.09.63-.09.94s.02.64.07.94l-2.03 1.58c-.18.14-.23.41-.12.61l1.92 3.32c.12.22.37.29.59.22l2.39-.96c.5.38 1.03.7 1.62.94l.36 2.54c.05.24.24.41.48.41h3.840c.24 0 .44-.17.47-.41l.36-2.54c.59-.24 1.13-.56 1.62-.94l2.39.96c.22.08.47 0 .59-.22l1.92-3.32c.12-.22.07-.47-.12-.61l-2.01-1.58zM12 15.6c-1.98 0-3.6-1.62-3.6-3.6s1.62-3.6 3.6-3.6 3.6 1.62 3.6 3.6-1.62 3.6-3.6 3.6z"/></svg>
<svg class="abs" style="left:1782px;top:580px;" width="30" height="30" viewBox="0 0 24 24"><path fill="#6e6e6e" d="M6 19c0 1.1.9 2 2 2h8c1.1 0 2-.9 2-2V7H6v12zM19 4h-3.5l-1-1h-5l-1 1H5v2h14V4z"/></svg>
<svg class="abs" style="left:1831px;top:580px;" width="30" height="30" viewBox="0 0 24 24"><path fill="#6e6e6e" d="M11 18c0 1.1-.9 2-2 2s-2-.9-2-2 .9-2 2-2 2 .9 2 2zm-2-8c-1.1 0-2 .9-2 2s.9 2 2 2 2-.9 2-2-.9-2-2-2zm0-6c-1.1 0-2 .9-2 2s.9 2 2 2 2-.9 2-2-.9-2-2-2zm6 4c1.1 0 2-.9 2-2s-.9-2-2-2-2 .9-2 2 .9 2 2 2zm0 2c-1.1 0-2 .9-2 2s.9 2 2 2 2-.9 2-2-.9-2-2-2zm0 6c-1.1 0-2 .9-2 2s.9 2 2 2 2-.9 2-2-.9-2-2-2z"/></svg>
<div class="abs" style="left:1490px;top:635.2px;width:126.4px;height:48.8px;border:1px solid #979797;border-radius:5px"></div>
<div class="abs t " style="left:1532.00px;top:650.74px;font-size:19.1px;color:#555;font-weight:normal;transform:scaleX(0.8994);transform-origin:0 0;">Set</div>
<div class="abs" style="left:1632.4px;top:635.2px;width:74px;height:48.8px;border:1px solid #979797;border-radius:5px"></div>
<div class="abs t " style="left:1647.00px;top:650.74px;font-size:19.1px;color:#111;font-weight:normal;">0</div>
<div class="abs" style="left:1683px;top:648.5px;width:19px;height:24px;background:#a3a3a3"></div>
<svg class="abs" style="left:1686px;top:651px" width="13" height="19" viewBox="0 0 13 19"><path fill="#333" d="M6.5 1.5L12 7.5H1zM1 11.5h11L6.5 17.5z"/></svg>
<svg class="abs" style="left:1732px;top:645px;" width="30" height="30" viewBox="0 0 24 24"><path fill="#6e6e6e" d="M19.14 12.94c.04-.3.06-.61.06-.94 0-.32-.02-.64-.07-.94l2.03-1.58c.18-.14.23-.41.12-.61l-1.92-3.32c-.12-.22-.37-.29-.59-.22l-2.39.96c-.5-.38-1.03-.7-1.62-.94l-.36-2.54c-.04-.24-.24-.41-.48-.41h-3.84c-.24 0-.43.17-.47.41l-.36 2.54c-.59.24-1.13.57-1.62.94l-2.39-.96c-.22-.08-.47 0-.59.22L2.74 8.87c-.12.21-.08.47.12.61l2.03 1.58c-.05.3-.09.63-.09.94s.02.64.07.94l-2.03 1.58c-.18.14-.23.41-.12.61l1.92 3.32c.12.22.37.29.59.22l2.39-.96c.5.38 1.03.7 1.62.94l.36 2.54c.05.24.24.41.48.41h3.840c.24 0 .44-.17.47-.41l.36-2.54c.59-.24 1.13-.56 1.62-.94l2.39.96c.22.08.47 0 .59-.22l1.92-3.32c.12-.22.07-.47-.12-.61l-2.01-1.58zM12 15.6c-1.98 0-3.6-1.62-3.6-3.6s1.62-3.6 3.6-3.6 3.6 1.62 3.6 3.6-1.62 3.6-3.6 3.6z"/></svg>
<svg class="abs" style="left:1782px;top:645px;" width="30" height="30" viewBox="0 0 24 24"><path fill="#6e6e6e" d="M6 19c0 1.1.9 2 2 2h8c1.1 0 2-.9 2-2V7H6v12zM19 4h-3.5l-1-1h-5l-1 1H5v2h14V4z"/></svg>
<svg class="abs" style="left:1831px;top:645px;" width="30" height="30" viewBox="0 0 24 24"><path fill="#6e6e6e" d="M11 18c0 1.1-.9 2-2 2s-2-.9-2-2 .9-2 2-2 2 .9 2 2zm-2-8c-1.1 0-2 .9-2 2s.9 2 2 2 2-.9 2-2-.9-2-2-2zm0-6c-1.1 0-2 .9-2 2s.9 2 2 2 2-.9 2-2-.9-2-2-2zm6 4c1.1 0 2-.9 2-2s-.9-2-2-2-2 .9-2 2 .9 2 2 2zm0 2c-1.1 0-2 .9-2 2s.9 2 2 2 2-.9 2-2-.9-2-2-2zm0 6c-1.1 0-2 .9-2 2s.9 2 2 2 2-.9 2-2-.9-2-2-2z"/></svg>
<div class="abs" style="left:1490px;top:700.2px;width:126.4px;height:48.8px;border:1px solid #979797;border-radius:5px"></div>
<div class="abs t " style="left:1532.00px;top:715.74px;font-size:19.1px;color:#555;font-weight:normal;transform:scaleX(0.8994);transform-origin:0 0;">Set</div>
<div class="abs" style="left:1632.4px;top:700.2px;width:74px;height:48.8px;border:1px solid #979797;border-radius:5px"></div>
<div class="abs t " style="left:1647.00px;top:715.74px;font-size:19.1px;color:#111;font-weight:normal;">0</div>
<div class="abs" style="left:1683px;top:713.5px;width:19px;height:24px;background:#a3a3a3"></div>
<svg class="abs" style="left:1686px;top:716px" width="13" height="19" viewBox="0 0 13 19"><path fill="#333" d="M6.5 1.5L12 7.5H1zM1 11.5h11L6.5 17.5z"/></svg>
<svg class="abs" style="left:1732px;top:710px;" width="30" height="30" viewBox="0 0 24 24"><path fill="#6e6e6e" d="M19.14 12.94c.04-.3.06-.61.06-.94 0-.32-.02-.64-.07-.94l2.03-1.58c.18-.14.23-.41.12-.61l-1.92-3.32c-.12-.22-.37-.29-.59-.22l-2.39.96c-.5-.38-1.03-.7-1.62-.94l-.36-2.54c-.04-.24-.24-.41-.48-.41h-3.84c-.24 0-.43.17-.47.41l-.36 2.54c-.59.24-1.13.57-1.62.94l-2.39-.96c-.22-.08-.47 0-.59.22L2.74 8.87c-.12.21-.08.47.12.61l2.03 1.58c-.05.3-.09.63-.09.94s.02.64.07.94l-2.03 1.58c-.18.14-.23.41-.12.61l1.92 3.32c.12.22.37.29.59.22l2.39-.96c.5.38 1.03.7 1.62.94l.36 2.54c.05.24.24.41.48.41h3.840c.24 0 .44-.17.47-.41l.36-2.54c.59-.24 1.13-.56 1.62-.94l2.39.96c.22.08.47 0 .59-.22l1.92-3.32c.12-.22.07-.47-.12-.61l-2.01-1.58zM12 15.6c-1.98 0-3.6-1.62-3.6-3.6s1.62-3.6 3.6-3.6 3.6 1.62 3.6 3.6-1.62 3.6-3.6 3.6z"/></svg>
<svg class="abs" style="left:1782px;top:710px;" width="30" height="30" viewBox="0 0 24 24"><path fill="#6e6e6e" d="M6 19c0 1.1.9 2 2 2h8c1.1 0 2-.9 2-2V7H6v12zM19 4h-3.5l-1-1h-5l-1 1H5v2h14V4z"/></svg>
<svg class="abs" style="left:1831px;top:710px;" width="30" height="30" viewBox="0 0 24 24"><path fill="#6e6e6e" d="M11 18c0 1.1-.9 2-2 2s-2-.9-2-2 .9-2 2-2 2 .9 2 2zm-2-8c-1.1 0-2 .9-2 2s.9 2 2 2 2-.9 2-2-.9-2-2-2zm0-6c-1.1 0-2 .9-2 2s.9 2 2 2 2-.9 2-2-.9-2-2-2zm6 4c1.1 0 2-.9 2-2s-.9-2-2-2-2 .9-2 2 .9 2 2 2zm0 2c-1.1 0-2 .9-2 2s.9 2 2 2 2-.9 2-2-.9-2-2-2zm0 6c-1.1 0-2 .9-2 2s.9 2 2 2 2-.9 2-2-.9-2-2-2z"/></svg>
<div class="abs" style="left:1490px;top:765.2px;width:126.4px;height:48.8px;border:1px solid #979797;border-radius:5px"></div>
<div class="abs t " style="left:1532.00px;top:780.74px;font-size:19.1px;color:#555;font-weight:normal;transform:scaleX(0.8994);transform-origin:0 0;">Set</div>
<div class="abs" style="left:1632.4px;top:765.2px;width:74px;height:48.8px;border:1px solid #979797;border-radius:5px"></div>
<div class="abs t " style="left:1647.00px;top:780.74px;font-size:19.1px;color:#111;font-weight:normal;">0</div>
<div class="abs" style="left:1683px;top:778.5px;width:19px;height:24px;background:#a3a3a3"></div>
<svg class="abs" style="left:1686px;top:781px" width="13" height="19" viewBox="0 0 13 19"><path fill="#333" d="M6.5 1.5L12 7.5H1zM1 11.5h11L6.5 17.5z"/></svg>
<svg class="abs" style="left:1732px;top:775px;" width="30" height="30" viewBox="0 0 24 24"><path fill="#6e6e6e" d="M19.14 12.94c.04-.3.06-.61.06-.94 0-.32-.02-.64-.07-.94l2.03-1.58c.18-.14.23-.41.12-.61l-1.92-3.32c-.12-.22-.37-.29-.59-.22l-2.39.96c-.5-.38-1.03-.7-1.62-.94l-.36-2.54c-.04-.24-.24-.41-.48-.41h-3.84c-.24 0-.43.17-.47.41l-.36 2.54c-.59.24-1.13.57-1.62.94l-2.39-.96c-.22-.08-.47 0-.59.22L2.74 8.87c-.12.21-.08.47.12.61l2.03 1.58c-.05.3-.09.63-.09.94s.02.64.07.94l-2.03 1.58c-.18.14-.23.41-.12.61l1.92 3.32c.12.22.37.29.59.22l2.39-.96c.5.38 1.03.7 1.62.94l.36 2.54c.05.24.24.41.48.41h3.840c.24 0 .44-.17.47-.41l.36-2.54c.59-.24 1.13-.56 1.62-.94l2.39.96c.22.08.47 0 .59-.22l1.92-3.32c.12-.22.07-.47-.12-.61l-2.01-1.58zM12 15.6c-1.98 0-3.6-1.62-3.6-3.6s1.62-3.6 3.6-3.6 3.6 1.62 3.6 3.6-1.62 3.6-3.6 3.6z"/></svg>
<svg class="abs" style="left:1782px;top:775px;" width="30" height="30" viewBox="0 0 24 24"><path fill="#6e6e6e" d="M6 19c0 1.1.9 2 2 2h8c1.1 0 2-.9 2-2V7H6v12zM19 4h-3.5l-1-1h-5l-1 1H5v2h14V4z"/></svg>
<svg class="abs" style="left:1831px;top:775px;" width="30" height="30" viewBox="0 0 24 24"><path fill="#6e6e6e" d="M11 18c0 1.1-.9 2-2 2s-2-.9-2-2 .9-2 2-2 2 .9 2 2zm-2-8c-1.1 0-2 .9-2 2s.9 2 2 2 2-.9 2-2-.9-2-2-2zm0-6c-1.1 0-2 .9-2 2s.9 2 2 2 2-.9 2-2-.9-2-2-2zm6 4c1.1 0 2-.9 2-2s-.9-2-2-2-2 .9-2 2 .9 2 2 2zm0 2c-1.1 0-2 .9-2 2s.9 2 2 2 2-.9 2-2-.9-2-2-2zm0 6c-1.1 0-2 .9-2 2s.9 2 2 2 2-.9 2-2-.9-2-2-2z"/></svg>
<div class="abs" style="left:1490px;top:830.2px;width:126.4px;height:48.8px;border:1px solid #979797;border-radius:5px"></div>
<div class="abs t " style="left:1532.00px;top:845.74px;font-size:19.1px;color:#555;font-weight:normal;transform:scaleX(0.8994);transform-origin:0 0;">Set</div>
<div class="abs" style="left:1632.4px;top:830.2px;width:74px;height:48.8px;border:1px solid #979797;border-radius:5px"></div>
<div class="abs t " style="left:1647.00px;top:845.74px;font-size:19.1px;color:#111;font-weight:normal;">0</div>
<div class="abs" style="left:1683px;top:843.5px;width:19px;height:24px;background:#a3a3a3"></div>
<svg class="abs" style="left:1686px;top:846px" width="13" height="19" viewBox="0 0 13 19"><path fill="#333" d="M6.5 1.5L12 7.5H1zM1 11.5h11L6.5 17.5z"/></svg>
<svg class="abs" style="left:1732px;top:840px;" width="30" height="30" viewBox="0 0 24 24"><path fill="#6e6e6e" d="M19.14 12.94c.04-.3.06-.61.06-.94 0-.32-.02-.64-.07-.94l2.03-1.58c.18-.14.23-.41.12-.61l-1.92-3.32c-.12-.22-.37-.29-.59-.22l-2.39.96c-.5-.38-1.03-.7-1.62-.94l-.36-2.54c-.04-.24-.24-.41-.48-.41h-3.84c-.24 0-.43.17-.47.41l-.36 2.54c-.59.24-1.13.57-1.62.94l-2.39-.96c-.22-.08-.47 0-.59.22L2.74 8.87c-.12.21-.08.47.12.61l2.03 1.58c-.05.3-.09.63-.09.94s.02.64.07.94l-2.03 1.58c-.18.14-.23.41-.12.61l1.92 3.32c.12.22.37.29.59.22l2.39-.96c.5.38 1.03.7 1.62.94l.36 2.54c.05.24.24.41.48.41h3.840c.24 0 .44-.17.47-.41l.36-2.54c.59-.24 1.13-.56 1.62-.94l2.39.96c.22.08.47 0 .59-.22l1.92-3.32c.12-.22.07-.47-.12-.61l-2.01-1.58zM12 15.6c-1.98 0-3.6-1.62-3.6-3.6s1.62-3.6 3.6-3.6 3.6 1.62 3.6 3.6-1.62 3.6-3.6 3.6z"/></svg>
<svg class="abs" style="left:1782px;top:840px;" width="30" height="30" viewBox="0 0 24 24"><path fill="#6e6e6e" d="M6 19c0 1.1.9 2 2 2h8c1.1 0 2-.9 2-2V7H6v12zM19 4h-3.5l-1-1h-5l-1 1H5v2h14V4z"/></svg>
<svg class="abs" style="left:1831px;top:840px;" width="30" height="30" viewBox="0 0 24 24"><path fill="#6e6e6e" d="M11 18c0 1.1-.9 2-2 2s-2-.9-2-2 .9-2 2-2 2 .9 2 2zm-2-8c-1.1 0-2 .9-2 2s.9 2 2 2 2-.9 2-2-.9-2-2-2zm0-6c-1.1 0-2 .9-2 2s.9 2 2 2 2-.9 2-2-.9-2-2-2zm6 4c1.1 0 2-.9 2-2s-.9-2-2-2-2 .9-2 2 .9 2 2 2zm0 2c-1.1 0-2 .9-2 2s.9 2 2 2 2-.9 2-2-.9-2-2-2zm0 6c-1.1 0-2 .9-2 2s.9 2 2 2 2-.9 2-2-.9-2-2-2z"/></svg>
<div class="abs" style="left:1913px;top:471px;width:7px;height:351px;background:#8a8a8a"></div>
<div class="abs" style="left:745px;top:1001px;width:1148px;height:90px;background:#adadad;border-radius:8px"></div>
<div class="abs t " style="left:764.56px;top:1023.19px;font-size:21.3px;color:#161616;font-weight:normal;transform:scaleX(0.9408);transform-origin:0 0;-webkit-text-stroke:0.45px #161616;">Card appearance</div>
<div class="abs" style="left:765px;top:1065.5px;width:1108px;height:40px;border:1px solid #979797;border-radius:8px"></div>
<div class="abs" style="left:1056px;top:1073.5px;width:687px;height:40px;border:1px solid #979797;border-radius:5px"></div>
<div class="abs" style="left:1753px;top:1073.5px;width:49px;height:40px;border:1px solid #979797;border-radius:5px"></div>
<div class="abs" style="left:1813px;top:1073.5px;width:50px;height:40px;border:1px solid #979797;border-radius:5px"></div>
<div class="abs" style="left:398px;top:114px;width:1125px;height:853px;border-radius:4px;background:#fff;overflow:hidden;box-shadow:0 11px 15px -7px rgba(0,0,0,.2),0 24px 38px 3px rgba(0,0,0,.14),0 9px 46px 8px rgba(0,0,0,.12)">
</div>
<div class="abs" style="left:398px;top:114px;width:1125px;height:80px;background:#006b5c;border-radius:4px 4px 0 0"></div>
<div class="abs t " style="left:416.54px;top:139.24px;font-size:26.6px;color:#ffffff;font-weight:normal;transform:scaleX(0.9801);transform-origin:0 0;-webkit-text-stroke:0.45px #ffffff;">Data key configuration</div>
<div class="abs" style="left:1245px;top:133.75px;width:207px;height:39.25px;border-radius:20px;background:#00655a"></div>
<div class="abs" style="left:1340px;top:137.8px;width:110px;height:33.2px;border-radius:17px;background:#fff"></div>
<div class="abs t " style="left:1263.30px;top:143.84px;font-size:19.1px;color:#c5e3dd;font-weight:normal;transform:scaleX(0.8922);transform-origin:0 0;">General</div>
<div class="abs t " style="left:1355.20px;top:143.84px;font-size:19.1px;color:#00695c;font-weight:normal;transform:scaleX(0.9252);transform-origin:0 0;-webkit-text-stroke:0.45px #00695c;">Advanced</div>
<svg class="abs" style="left:1468px;top:139.4px;" width="29" height="29" viewBox="0 0 24 24"><path fill="#ffffff" d="M19 6.41L17.59 5 12 10.59 6.41 5 5 6.41 10.59 12 5 17.59 6.41 19 12 13.41 17.59 19 19 17.59 13.41 12z"/></svg>
<div class="abs" style="left:398px;top:198.8px;width:1112px;height:690px;background:#f6f7f9;border-radius:0 0 12px 12px"></div>
<div class="abs" style="left:1516.5px;top:466px;width:6.5px;height:434px;background:#d6d6d6"></div>
<div class="abs" style="left:418px;top:194px;width:1078px;height:114.5px;background:#fff;border-radius:0 0 8px 8px"></div>
<div class="abs" style="left:438.5px;top:218.3px;width:1037px;height:70px;border:1px solid #dedede;border-radius:6px"></div>
<div class="abs t " style="left:458.33px;top:241.99px;font-size:21.3px;color:#212121;font-weight:normal;transform:scaleX(0.9651);transform-origin:0 0;">Include column in export</div>
<div class="abs" style="left:1191.25px;top:227.3px;width:274.4px;height:51.5px;border:1px solid #d3d3d3;border-radius:4px"></div>
<div class="abs t " style="left:1206.25px;top:242.91px;font-size:19.3px;color:#212121;font-weight:normal;transform:scaleX(0.9730);transform-origin:0 0;">Only if column visible</div>
<svg class="abs" style="left:1438.5px;top:250.8px" width="13.2" height="6.7" viewBox="0 0 10 5"><path fill="#757575" d="M0 0h10L5 5z"/></svg>
<div class="abs" style="left:418px;top:329.4px;width:1078px;height:69.4px;background:#fff;border-radius:8px"></div>
<div class="abs" style="left:438.7px;top:356.8px;width:43.8px;height:14px;border-radius:7px;background:#dcdcdc"></div>
<div class="abs" style="left:438.3px;top:351.55px;width:24.5px;height:24.5px;border-radius:50%;background:#616161;box-shadow:0 1px 2px rgba(0,0,0,.3)"></div>
<div class="abs" style="left:444.5px;top:362.8px;width:12px;height:2.2px;background:#fff"></div>
<div class="abs t " style="left:501.90px;top:353.36px;font-size:20.9px;color:#212121;font-weight:normal;transform:scaleX(1.0014);transform-origin:0 0;">Use cell style function</div>
<div class="abs t " style="left:1270.40px;top:353.11px;font-size:21.2px;color:#757575;font-weight:normal;transform:scaleX(0.9841);transform-origin:0 0;-webkit-text-stroke:0.45px #757575;">Advanced settings</div>
<svg class="abs" style="left:1460.5px;top:359.5px" width="16" height="9" viewBox="0 0 16 9"><path fill="none" stroke="#757575" stroke-width="2" d="M1.5 1.5L8 7.5l6.5-6"/></svg>
<div class="abs" style="left:418px;top:419.4px;width:1078px;height:461.6px;background:#fff;border-radius:8px"></div>
<div class="abs" style="left:438.7px;top:445.5px;width:43.8px;height:17px;border-radius:8.5px;background:#ff8a65"></div>
<div class="abs" style="left:458.7px;top:441.8px;width:24.4px;height:24.4px;border-radius:50%;background:#ff5722;box-shadow:0 1px 2px rgba(0,0,0,.25)"></div>
<svg class="abs" style="left:461.9px;top:445px" width="18" height="18" viewBox="0 0 24 24"><path fill="none" stroke="#fff" stroke-width="3.6" stroke-linecap="round" stroke-linejoin="round" d="M5 12.5l4.5 4.5L19 7.5"/></svg>
<div class="abs t " style="left:501.90px;top:442.96px;font-size:20.9px;color:#212121;font-weight:normal;transform:scaleX(1.0045);transform-origin:0 0;">Use cell content function</div>
<div class="abs t " style="left:1270.40px;top:443.11px;font-size:21.2px;color:#757575;font-weight:normal;transform:scaleX(0.9841);transform-origin:0 0;-webkit-text-stroke:0.45px #757575;">Advanced settings</div>
<svg class="abs" style="left:1460.5px;top:449.5px" width="16" height="9" viewBox="0 0 16 9"><path fill="none" stroke="#757575" stroke-width="2" d="M1.5 7.5L8 1.5l6.5 6"/></svg>
<div class="abs" style="left:438.7px;top:496.5px;width:43.8px;height:17px;border-radius:8.5px;background:#ff8a65"></div>
<div class="abs" style="left:458.7px;top:492.8px;width:24.4px;height:24.4px;border-radius:50%;background:#ff5722;box-shadow:0 1px 2px rgba(0,0,0,.25)"></div>
<svg class="abs" style="left:461.9px;top:496px" width="18" height="18" viewBox="0 0 24 24"><path fill="none" stroke="#fff" stroke-width="3.6" stroke-linecap="round" stroke-linejoin="round" d="M5 12.5l4.5 4.5L19 7.5"/></svg>
<div class="abs t " style="left:502.90px;top:493.86px;font-size:20.9px;color:#212121;font-weight:normal;transform:scaleX(1.0030);transform-origin:0 0;">Use cell content function on export</div>
<div class="abs t " style="left:438.10px;top:556.50px;font-size:16.9px;color:#757575;font-weight:normal;transform:scaleX(1.0125);transform-origin:0 0;">Cell content function: f(value, entity, ctx) *</div>
<div class="abs" style="left:1298px;top:544px;width:40px;height:40px;border-radius:50%;background:#f3f3f3"></div>
<svg class="abs" style="left:1304px;top:554px" width="28" height="24" viewBox="0 0 28 24"><rect x="1.5" y="1.5" width="25" height="20.7" rx="2" fill="none" stroke="#00695c" stroke-width="3"/><path fill="none" stroke="#00695c" stroke-width="2.5" stroke-linejoin="round" d="M11.8 7.2H10.8C9.5 7.2 9 7.8 8.7 9L8.3 10.8C8 11.8 7.3 12.4 6.2 12.4C7.3 12.4 8 13 8.3 14L8.7 15.8C9 17 9.5 17.6 10.8 17.6H11.8M16.2 7.2H17.2C18.5 7.2 19 7.8 19.3 9L19.7 10.8C20 11.8 20.7 12.4 21.8 12.4C20.7 12.4 20 13 19.7 14L19.3 15.8C19 17 18.5 17.6 17.2 17.6H16.2"/></svg>
<div class="abs" style="left:1343px;top:551px;width:43px;height:29px;border-radius:4px;background:#f0f0f0"></div>
<div class="abs t " style="left:1348.00px;top:555.51px;font-size:16.8px;color:#757575;font-weight:normal;transform:scaleX(1.0035);transform-origin:0 0;-webkit-text-stroke:0.45px #757575;">Tidy</div>
<div class="abs" style="left:1391.6px;top:544.5px;width:39px;height:39px;border-radius:50%;background:#f3f3f3"></div>
<svg class="abs" style="left:1395.3px;top:550px;" width="30" height="30" viewBox="0 0 24 24"><path fill="#00695c" d="M11 18h2v-2h-2v2zm1-16C6.48 2 2 6.48 2 12s4.48 10 10 10 10-4.48 10-10S17.52 2 12 2zm0 18c-4.41 0-8-3.59-8-8s3.59-8 8-8 8 3.59 8 8-3.59 8-8 8zm0-14c-2.21 0-4 1.79-4 4h2c0-1.1.9-2 2-2s2 .9 2 2c0 2-3 1.75-3 5h2c0-2.25 3-2.5 3-5 0-2.21-1.79-4-4-4z"/></svg>
<div class="abs" style="left:1436px;top:544.5px;width:40px;height:40px;border-radius:50%;background:#f3f3f3"></div>
<svg class="abs" style="left:1439.5px;top:549.5px;" width="31" height="31" viewBox="0 0 24 24"><path fill="#757575" d="M7 14H5v5h5v-2H7v-3zm-2-4h2V7h3V5H5v5zm12 7h-3v2h5v-5h-2v3zM14 5v2h3v3h2V5h-5z"/></svg>
<div class="abs" style="left:438px;top:590px;width:1037.4px;height:252px;border:1px solid #c4c4c4;background:#fff;overflow:hidden">
<div class="abs" style="left:0;top:0;width:61.7px;height:252px;background:#ebebeb"></div>
<div class="abs" style="left:866.6px;top:0;width:1px;height:252px;background:#e8e8e8"></div>
<div class="abs" style="left:1028px;top:0;width:7px;height:124px;background:#cbcbcb"></div>
<div class="abs code" style="left:0;top:2.3999999999999773px;width:43.5px;text-align:right;color:#333">1</div>
<div class="abs code" style="left:66px;top:2.3999999999999773px"><span style="color:#0000ff">if</span><span style="color:#000"> (entity.temperature </span><span style="color:#687687">&amp;&amp;</span><span style="color:#000"> entity.humidity </span><span style="color:#687687">&amp;&amp;</span><span style="color:#000"> entity.co2){</span></div>
<div class="abs code" style="left:0;top:22.399999999999977px;width:43.5px;text-align:right;color:#333">2</div>
<div class="abs code" style="left:106px;top:22.399999999999977px"><span style="color:#0000ff">return</span><span style="color:#000"> </span><span style="color:#0a8a0a">&#x27;&lt;div style=&quot;display:flex;flex-direction:row;flex-wrap:wrap;gap:7px;margin:10px 0</span></div>
<div class="abs code" style="left:146px;top:42.39999999999998px"><span style="color:#0a8a0a">;align-items:center&quot;&gt;&#x27;</span><span style="color:#000"> </span><span style="color:#687687">+</span></div>
<div class="abs code" style="left:0;top:62.39999999999998px;width:43.5px;text-align:right;color:#333">3</div>
<div class="abs code" style="left:146px;top:62.39999999999998px"><span style="color:#0a8a0a">&#x27;&lt;div style=&quot;padding-left: 12px; padding-right: 12px; padding-top: 4px; padding-bottom:</span></div>
<div class="abs code" style="left:186px;top:82.39999999999998px"><span style="color:#0a8a0a">4px;background:#e0e0e0;border-radius:20px;&quot;&gt;Temp: &#x27;</span><span style="color:#000"> </span><span style="color:#687687">+</span><span style="color:#000"> entity.temperature.toFixed(</span><span style="color:#0000ff">0</span><span style="color:#000">)</span></div>
<div class="abs code" style="left:186px;top:102.39999999999998px"><span style="color:#687687">+</span><span style="color:#000"> </span><span style="color:#0a8a0a">&#x27; °C&lt;/div&gt;&#x27;</span><span style="color:#000"> </span><span style="color:#687687">+</span></div>
<div class="abs code" style="left:0;top:122.39999999999998px;width:43.5px;text-align:right;color:#333">4</div>
<div class="abs code" style="left:146px;top:122.39999999999998px"><span style="color:#0a8a0a">&#x27;&lt;div style=&quot;padding-left: 12px; padding-right: 12px; padding-top: 4px; padding-bottom:</span></div>
<div class="abs code" style="left:186px;top:142.39999999999998px"><span style="color:#0a8a0a">4px;background:#e0e0e0;border-radius:20px&quot;&gt;Hum: &#x27;</span><span style="color:#000"> </span><span style="color:#687687">+</span><span style="color:#000"> entity.humidity.toFixed(</span><span style="color:#0000ff">0</span><span style="color:#000">) </span><span style="color:#687687">+</span><span style="color:#000"> </span><span style="color:#0a8a0a">&#x27;</span></div>
<div class="abs code" style="left:186px;top:162.39999999999998px"><span style="color:#0a8a0a">%&lt;/div&gt;&#x27;</span><span style="color:#000"> </span><span style="color:#687687">+</span></div>
<div class="abs code" style="left:0;top:182.39999999999998px;width:43.5px;text-align:right;color:#333">5</div>
<div class="abs code" style="left:146px;top:182.39999999999998px"><span style="color:#0a8a0a">&#x27;&lt;div style=&quot;padding-left: 12px; padding-right: 12px; padding-top: 4px; padding-bottom:</span></div>
<div class="abs code" style="left:186px;top:202.39999999999998px"><span style="color:#0a8a0a">4px;background:#e0e0e0;border-radius:20px&quot;&gt;CO2: &#x27;</span><span style="color:#000"> </span><span style="color:#687687">+</span><span style="color:#000"> entity.co2.toFixed(</span><span style="color:#0000ff">0</span><span style="color:#000">) </span><span style="color:#687687">+</span><span style="color:#000"> </span><span style="color:#0a8a0a">&#x27; ppm</span></div>
<div class="abs code" style="left:186px;top:222.39999999999998px"><span style="color:#0a8a0a">&lt;/div&gt;&#x27;</span></div>
<div class="abs code" style="left:0;top:242.39999999999998px;width:43.5px;text-align:right;color:#333">6</div>
<div class="abs code" style="left:106px;top:242.39999999999998px"><span style="color:#687687">+</span><span style="color:#000"> </span><span style="color:#0a8a0a">&#x27;&lt;/div&gt;&#x27;;</span></div>
<svg class="abs" style="left:50px;top:8.5px" width="7" height="5" viewBox="0 0 7 5"><path fill="#8a8a8a" d="M0 0h7L3.5 4z"/></svg>
<div class="abs" style="left:107px;top:60px;width:0;height:20px;border-left:1px dotted #c9c9c9"></div>
<div class="abs" style="left:107px;top:120px;width:0;height:20px;border-left:1px dotted #c9c9c9"></div>
<div class="abs" style="left:107px;top:180px;width:0;height:20px;border-left:1px dotted #c9c9c9"></div>
</div>
<div class="abs t " style="left:1355.00px;top:923.86px;font-size:19px;color:#00695c;font-weight:normal;transform:scaleX(0.9444);transform-origin:0 0;-webkit-text-stroke:0.45px #00695c;">Cancel</div>
<div class="abs" style="left:1432.6px;top:911.8px;width:80.7px;height:45.2px;border-radius:6px;background:#006b5c"></div>
<div class="abs t " style="left:1452.90px;top:924.36px;font-size:19px;color:#ffffff;font-weight:normal;transform:scaleX(0.9031);transform-origin:0 0;-webkit-text-stroke:0.45px #ffffff;">Save</div>
<div class="abs" style="left:430.2px;top:435.1px;width:309.00000000000006px;height:38.799999999999955px;border:3px solid #fbc33a;border-radius:9px;box-shadow:0 0 6px rgba(251,195,58,.45)"></div>
<div class="abs" style="left:430px;top:547px;width:1053.75px;height:302px;border:3.5px solid #fbc33a;border-radius:12px;box-shadow:0 0 6px rgba(251,195,58,.45)"></div>
<div class="abs" style="left:1430.2px;top:909.2px;width:85.39999999999986px;height:50.5px;border:3px solid #fbc33a;border-radius:9px;box-shadow:0 0 6px rgba(251,195,58,.45)"></div>
<div class="abs" style="left:475px;top:409px;width:0;height:26px;border-left:3px dashed #fbc33a"></div>
<div class="abs" style="left:472.4px;top:431px;width:8px;height:8px;border-radius:50%;background:#fbc33a"></div>
<svg class="abs" style="left:1510px;top:930px" width="60" height="14" viewBox="0 0 60 14"><circle cx="4.5" cy="6.8" r="5" fill="#fbc33a"/><path d="M4 6.5H57" stroke="#fbc33a" stroke-width="3.2" stroke-dasharray="16 5"/></svg>
<div class="abs" style="left:51px;top:368.3px;width:576.6px;height:41.39999999999998px;border:3px solid #fbc33a;border-radius:10px;background:#fdf0de;box-shadow:0 0 4px 1px rgba(130,95,20,.35)"></div>
<div class="abs t " style="left:61.00px;top:375.54px;font-size:27.85px;color:#000;font-weight:normal;">Turn on the "Use cell content function" option</div>
<div class="abs" style="left:74.4px;top:336.25px;width:41.39999999999999px;height:34.75px;border:3px solid #fbc33a;border-radius:9px;background:#fff"></div>
<div class="abs t " style="left:79.80px;top:340.34px;font-size:27.85px;color:#000;font-weight:normal;">10</div>
<div class="abs" style="left:895.3px;top:478.3px;width:475.70000000000005px;height:74.99999999999994px;border:3px solid #fbc33a;border-radius:10px;background:#fdf0de;box-shadow:0 0 4px 1px rgba(130,95,20,.35)"></div>
<div class="abs t " style="left:904.70px;top:486.54px;font-size:27.85px;color:#000;font-weight:normal;">Paste the cell content function</div>
<div class="abs t " style="left:904.70px;top:519.54px;font-size:27.85px;color:#000;font-weight:normal;">by copying it from the documentation</div>
<div class="abs" style="left:918.7px;top:446.3px;width:40.5px;height:34.5px;border:3px solid #fbc33a;border-radius:9px;background:#fff"></div>
<div class="abs t " style="left:925.80px;top:449.74px;font-size:27.85px;color:#000;font-weight:normal;">11</div>
<div class="abs" style="left:1566.9px;top:918px;width:168.0999999999999px;height:42px;border:3px solid #fbc33a;border-radius:10px;background:#fdf0de;box-shadow:0 0 4px 1px rgba(130,95,20,.35)"></div>
<div class="abs t " style="left:1576.25px;top:925.94px;font-size:27.85px;color:#000;font-weight:normal;">Click "Save"</div>
<div class="abs" style="left:1585.4px;top:886px;width:41.5px;height:35px;border:3px solid #fbc33a;border-radius:9px;background:#fff"></div>
<div class="abs t " style="left:1591.00px;top:889.94px;font-size:27.85px;color:#000;font-weight:normal;">12</div>
<svg class="abs" style="left:885px;top:548px" width="60" height="60" viewBox="0 0 60 60"><path fill="#a8741a" transform="translate(-1.2,0.8)" d="M29 5.8L36.7 5.8C33 11 31.5 17 31.7 23.5C33 21.5 35 21 37 21.2C39.5 21.5 41 23 40.8 24L27.5 46.5C26 48 24 48 22.5 46.5L11 16C12.5 15.5 15.5 15.5 17.5 17.5C19.5 19.5 21 22 22.3 24.5C23 17 25.5 10.5 29 5.8Z"/><path fill="#fcc433" d="M29 5.8L36.7 5.8C33 11 31.5 17 31.7 23.5C33 21.5 35 21 37 21.2C39.5 21.5 41 23 40.8 24L27.5 46.5C26 48 24 48 22.5 46.5L11 16C12.5 15.5 15.5 15.5 17.5 17.5C19.5 19.5 21 22 22.3 24.5C23 17 25.5 10.5 29 5.8Z"/></svg>
<svg class="abs" style="left:445px;top:455px" width="35" height="40" viewBox="0 0 35 40"><path fill="#fff" stroke="#000" stroke-width="1" stroke-linejoin="round" d="M11.5 21V10.5Q11.5 9.3 12.9 9.3Q14.3 9.3 14.3 10.5V14.8H17V15.8H20V16.8H22.5L23.5 18V24.5L22 28.5V30.2H12.5V28.5L7.3 20.5V18.8L9.3 18.5L11.5 20Z"/><path fill="none" stroke="#000" stroke-width=".9" d="M14.3 14.8V18.8M17 15.8V19.3M20 16.8V19.8"/><rect x="12.5" y="30.2" width="9" height="5.3" fill="#fbc433" stroke="#000" stroke-width="1"/><rect x="18.3" y="32.1" width="1.8" height="1.8" fill="#000"/></svg>
</body></html>
